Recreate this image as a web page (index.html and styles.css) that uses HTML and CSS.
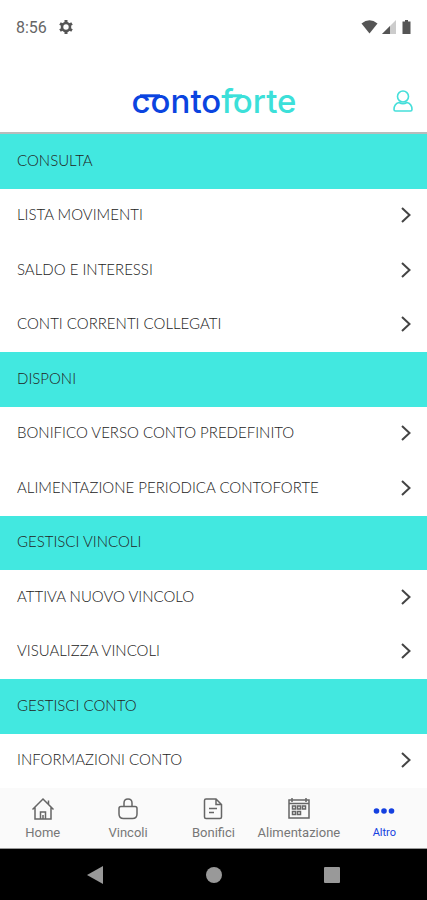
FILE: index.html
```html
<!DOCTYPE html>
<html lang="it">
  <head>
    <meta charset="utf-8">
    <meta name="viewport" content="width=device-width, initial-scale=1">
    <title>Contoforte</title>
    <link rel="stylesheet" href="styles.css">
  </head>
  <body>
    <div class="status-bar">
      <span class="time">8:56</span>
      <svg class="gear" width="16" height="16" viewBox="0 0 16 16">
        <circle cx="8" cy="8" r="4" fill="none" stroke="#555" stroke-width="2.6" />
        <path d="M8 1v3M8 12v3M2 4.5l2.6 1.5M11.4 10l2.6 1.5M2 11.5l2.6-1.5M11.4 6l2.6-1.5" stroke="#555" stroke-width="3" />
      </svg>
      <div class="signals">
        <svg width="17" height="14" viewBox="0 0 17 14">
          <path d="M0.500 3.500Q8.500-3 16.500 3.500L8.500 13.500Z" fill="#555" />
        </svg>
        <svg width="14" height="14" viewBox="0 0 14 14">
          <path d="M14 0v14H0Z" fill="#ccc" />
          <path d="M8 6v8H0Z" fill="#555" />
        </svg>
        <svg class="battery" width="9" height="14" viewBox="0 0 9 14">
          <path d="M3 0h3v1.500h2.500V14H0.500V1.500H3Z" fill="#555" />
        </svg>
      </div>
    </div>

    <header class="header">
      <svg class="logo" width="168" height="48" viewBox="0 0 168 48" role="img" aria-label="contoforte">
        <text class="logo-text" x="84" y="36" text-anchor="middle"><tspan fill="#0b44e0">conto</tspan><tspan fill="#3ce0d9">forte</tspan></text>
        <path d="M10 18.800H30" stroke="#0b44e0" stroke-width="3" />
        <path d="M98 18.800H112" stroke="#3ce0d9" stroke-width="3" />
      </svg>
      <button class="profile" aria-label="Profilo">
        <svg width="20" height="22" viewBox="0 0 20 22" fill="none" stroke="#45dfda" stroke-width="1.600">
          <circle cx="10" cy="6.500" r="5.500" />
          <path d="M6 12.500C2.500 13.500 1 16 1 19.500Q1 21 2.500 21H17.500Q19 21 19 19.500C19 16 17.500 13.500 14 12.500Q10 15 6 12.500Z" />
        </svg>
      </button>
    </header>

    <main class="menu">
      <h2 class="section">CONSULTA</h2>
      <a class="item" href="#">LISTA MOVIMENTI <svg class="arrow" viewBox="0 0 10 16"><path d="M1 2l7.500 7L1 16" /></svg></a>
      <a class="item" href="#">SALDO E INTERESSI <svg class="arrow" viewBox="0 0 10 16"><path d="M1 2l7.500 7L1 16" /></svg></a>
      <a class="item" href="#">CONTI CORRENTI COLLEGATI <svg class="arrow" viewBox="0 0 10 16"><path d="M1 2l7.500 7L1 16" /></svg></a>
      <h2 class="section">DISPONI</h2>
      <a class="item" href="#">BONIFICO VERSO CONTO PREDEFINITO <svg class="arrow" viewBox="0 0 10 16"><path d="M1 2l7.500 7L1 16" /></svg></a>
      <a class="item" href="#">ALIMENTAZIONE PERIODICA CONTOFORTE <svg class="arrow" viewBox="0 0 10 16"><path d="M1 2l7.500 7L1 16" /></svg></a>
      <h2 class="section">GESTISCI VINCOLI</h2>
      <a class="item" href="#">ATTIVA NUOVO VINCOLO <svg class="arrow" viewBox="0 0 10 16"><path d="M1 2l7.500 7L1 16" /></svg></a>
      <a class="item" href="#">VISUALIZZA VINCOLI <svg class="arrow" viewBox="0 0 10 16"><path d="M1 2l7.500 7L1 16" /></svg></a>
      <h2 class="section">GESTISCI CONTO</h2>
      <a class="item" href="#">INFORMAZIONI CONTO <svg class="arrow" viewBox="0 0 10 16"><path d="M1 2l7.500 7L1 16" /></svg></a>
    </main>

    <nav class="tabs">
      <a class="tab" href="#">
        <svg class="tab-icon" viewBox="0 0 24 24">
          <path d="M1.500 12.500L12 2l10.500 10.500M4 10.500V22h16V10.500M17.500 3.500v4M9.500 22v-7h5v7M12 22v-4" />
        </svg>
        Home
      </a>
      <a class="tab" href="#">
        <svg class="tab-icon" viewBox="0 0 24 24">
          <path d="M5 9.500h14q2 0 2 2V17q0 4.500-4.500 4.500h-9Q3 21.500 3 17v-5.500q0-2 2-2ZM8 9.500V6q0-4 4-4t4 4v3.500" />
        </svg>
        Vincoli
      </a>
      <a class="tab" href="#">
        <svg class="tab-icon" viewBox="0 0 24 24">
          <path d="M5 2h10l5.500 5.500V20q0 1.500-1.500 1.500H5Q3.500 21.500 3.500 20V3.500Q3.500 2 5 2ZM15 2v5.500h5.500M8 11.500h8M8 15.500h5" />
        </svg>
        Bonifici
      </a>
      <a class="tab" href="#">
        <svg class="tab-icon" viewBox="0 0 24 24">
          <path d="M2 3h20v18H2ZM2 6.500h20M5 1v4M19 1v4" />
          <path d="M5.500 9h3v3h-3ZM10.500 9h3v3h-3ZM15.500 9h3v3h-3ZM5.500 14.500h3v3h-3ZM10.500 14.500h3v3h-3Z" />
        </svg>
        Alimentazione
      </a>
      <a class="tab active" href="#">
        <svg class="tab-icon" viewBox="0 0 24 24">
          <circle cx="4.500" cy="14" r="2.800" />
          <circle cx="12" cy="14" r="2.800" />
          <circle cx="19.500" cy="14" r="2.800" />
        </svg>
        Altro
      </a>
    </nav>

    <div class="system-bar">
      <button class="key" aria-label="Indietro"><svg width="18" height="18" viewBox="0 0 18 18"><path d="M16 0v18L0 9Z" /></svg></button>
      <button class="key" aria-label="Schermata principale"><svg width="18" height="18" viewBox="0 0 18 18"><circle cx="9" cy="9" r="8" /></svg></button>
      <button class="key" aria-label="Recenti"><svg width="18" height="18" viewBox="0 0 18 18"><rect x="1" y="1" width="16" height="16" rx="1" /></svg></button>
    </div>
  </body>
</html>
```
FILE: styles.css
```css
* {
  box-sizing: border-box;
}

body {
  margin: 0;
  min-height: 100vh;
  display: flex;
  flex-direction: column;
  background-color: #fff;
  font-family: Lato, sans-serif;
}

a {
  color: inherit;
  text-decoration: none;
}

button {
  background: none;
  border: none;
  padding: 0;
  cursor: pointer;
}

svg {
  display: block;
}

/* Phone status bar */
.status-bar {
  display: flex;
  align-items: center;
  height: 54px;
  padding: 0 16px;
  font-family: Roboto, sans-serif;
  font-size: 16px;
  color: #666;
}

.gear {
  margin-left: 11px;
}

.signals {
  display: flex;
  gap: 4px;
  margin-left: auto;
}

.battery {
  margin-left: 2px;
}

.header {
  display: grid;
  grid-template-columns: 1fr auto 1fr;
  align-items: center;
  height: 80px;
  padding: 16px 14px 0;
  border-bottom: 2px solid #b8bcbc;
}

.logo {
  grid-column: 2;
}

.logo-text {
  font-family: Inter, sans-serif;
  font-size: 33px;
  font-weight: 500;
}

.profile {
  justify-self: end;
}

/* Menu rows share the free height equally */
.menu {
  flex: 1;
  display: grid;
  grid-auto-rows: minmax(48px, 1fr);
}

.section,
.item {
  display: flex;
  align-items: center;
  margin: 0;
  padding: 0 16px 3px 17px;
  font-size: 15px;
  font-weight: 300;
  color: #222;
}

.section {
  background-color: #42e8e0;
}

.item {
  justify-content: space-between;
}

.arrow {
  width: 10px;
  height: 16px;
  overflow: visible;
  fill: none;
  stroke: #444;
  stroke-width: 2;
}

/* Bottom tabs */
.tabs {
  display: grid;
  grid-template-columns: repeat(5, 1fr);
  height: 61px;
  background-color: #fafafa;
  border-bottom: 1px solid #999;
}

.tab {
  display: flex;
  flex-direction: column;
  align-items: center;
  gap: 4px;
  padding-top: 9px;
  font-family: Roboto, sans-serif;
  font-size: 13px;
  line-height: 16px;
  color: #777;
}

.tab-icon {
  width: 24px;
  height: 24px;
  fill: none;
  stroke: #666;
  stroke-width: 1.5;
}

.tab.active {
  font-size: 11px;
  color: #1440e0;
}

.tab.active .tab-icon {
  fill: #1440e0;
  stroke: none;
}

.system-bar {
  display: flex;
  justify-content: center;
  align-items: center;
  gap: 100px;
  height: 51px;
  background-color: #000;
}

.key {
  fill: #999;
}
```
